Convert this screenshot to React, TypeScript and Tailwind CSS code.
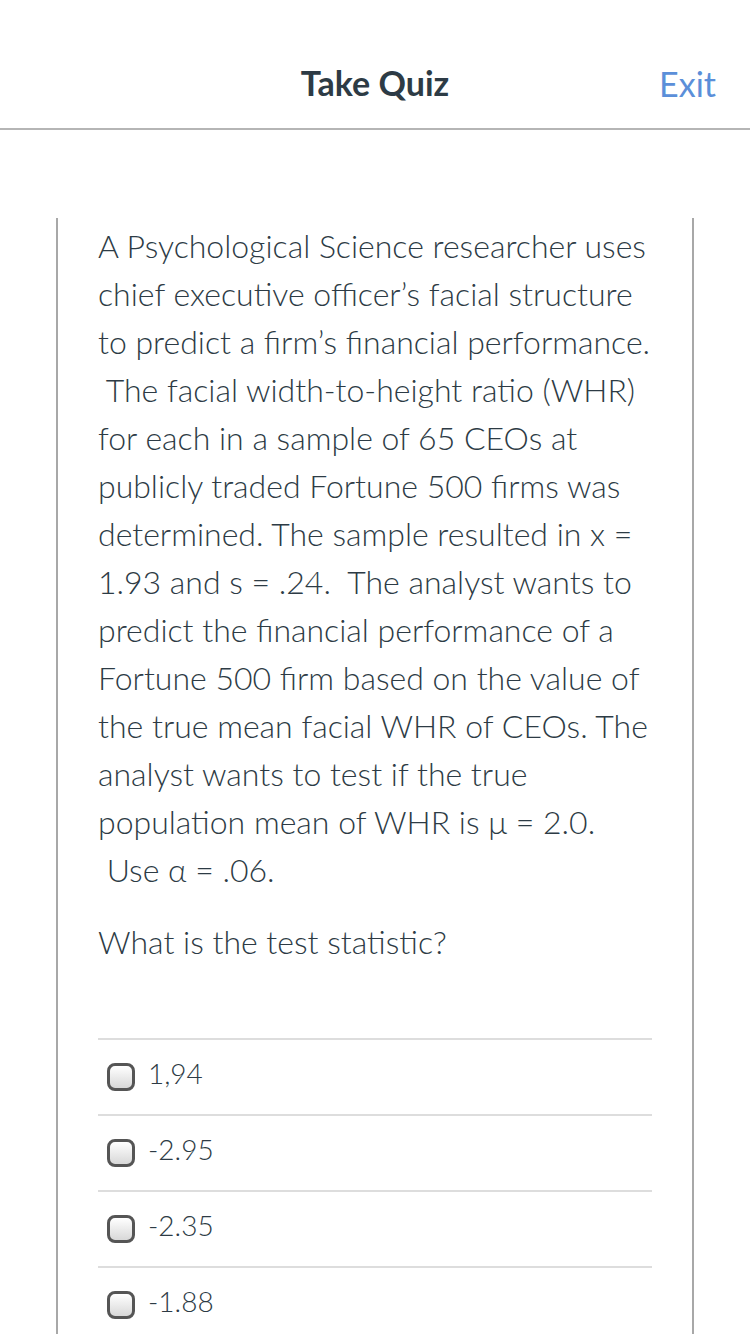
const lines = [
  "A Psychological Science researcher uses",
  "chief executive officer’s facial structure",
  "to predict a firm’s financial performance.",
  "\u00a0The facial width-to-height ratio (WHR)",
  "for each in a sample of 65 CEOs at",
  "publicly traded Fortune 500 firms was",
  "determined. The sample resulted in x =",
  "1.93 and s = .24.\u00a0 The analyst wants to",
  "predict the financial performance of a",
  "Fortune 500 firm based on the value of",
  "the true mean facial WHR of CEOs. The",
  "analyst wants to test if the true",
  "population mean of WHR is μ = 2.0.",
  "\u00a0Use α = .06.",
];

const answers = ["1,94", "-2.95", "-2.35", "-1.88"];

function Answer({ label }: { label: string }) {
  return (
    <label className="flex items-center h-[76px] border-t-2 border-[#dddddd] pl-[9px]">
      <span className="w-[28px] h-[28px] rounded-[8px] border-[3px] border-[#555555] bg-gradient-to-b from-white to-[#d8d8d8] shrink-0" />
      <span className="ml-[13px] text-[28px] font-light text-[#2d3b45] -mt-[9px]">{label}</span>
    </label>
  );
}

export default function App() {
  return (
    <div className="w-[750px] min-h-[1334px] bg-white overflow-hidden" style={{ fontFamily: "Lato, 'Open Sans', sans-serif" }}>
      <header className="relative h-[130px] border-b-2 border-[#b5b5b5] flex justify-center">
        <h1 className="mt-[66px] text-[34px] leading-none font-bold text-[#2d3b45]">Take Quiz</h1>
        <span className="absolute right-[34px] top-[67px] text-[34px] text-[#5b8fd9] leading-none">Exit</span>
      </header>
      <main className="mt-[88px] ml-[56px] w-[638px] border-x-2 border-[#a8a8a8] px-[40px] pt-[4px] pb-[40px]">
        <div className="text-[32px] leading-[48px] font-light text-[#2d3b45] whitespace-nowrap">
          {lines.map((l, i) => (
            <div key={i}>{l}</div>
          ))}
        </div>
        <p className="mt-[24px] text-[32px] leading-[48px] font-light text-[#2d3b45]">What is the test statistic?</p>
        <div className="mt-[72px]">
          {answers.map((a) => (
            <Answer key={a} label={a} />
          ))}
        </div>
      </main>
    </div>
  );
}
